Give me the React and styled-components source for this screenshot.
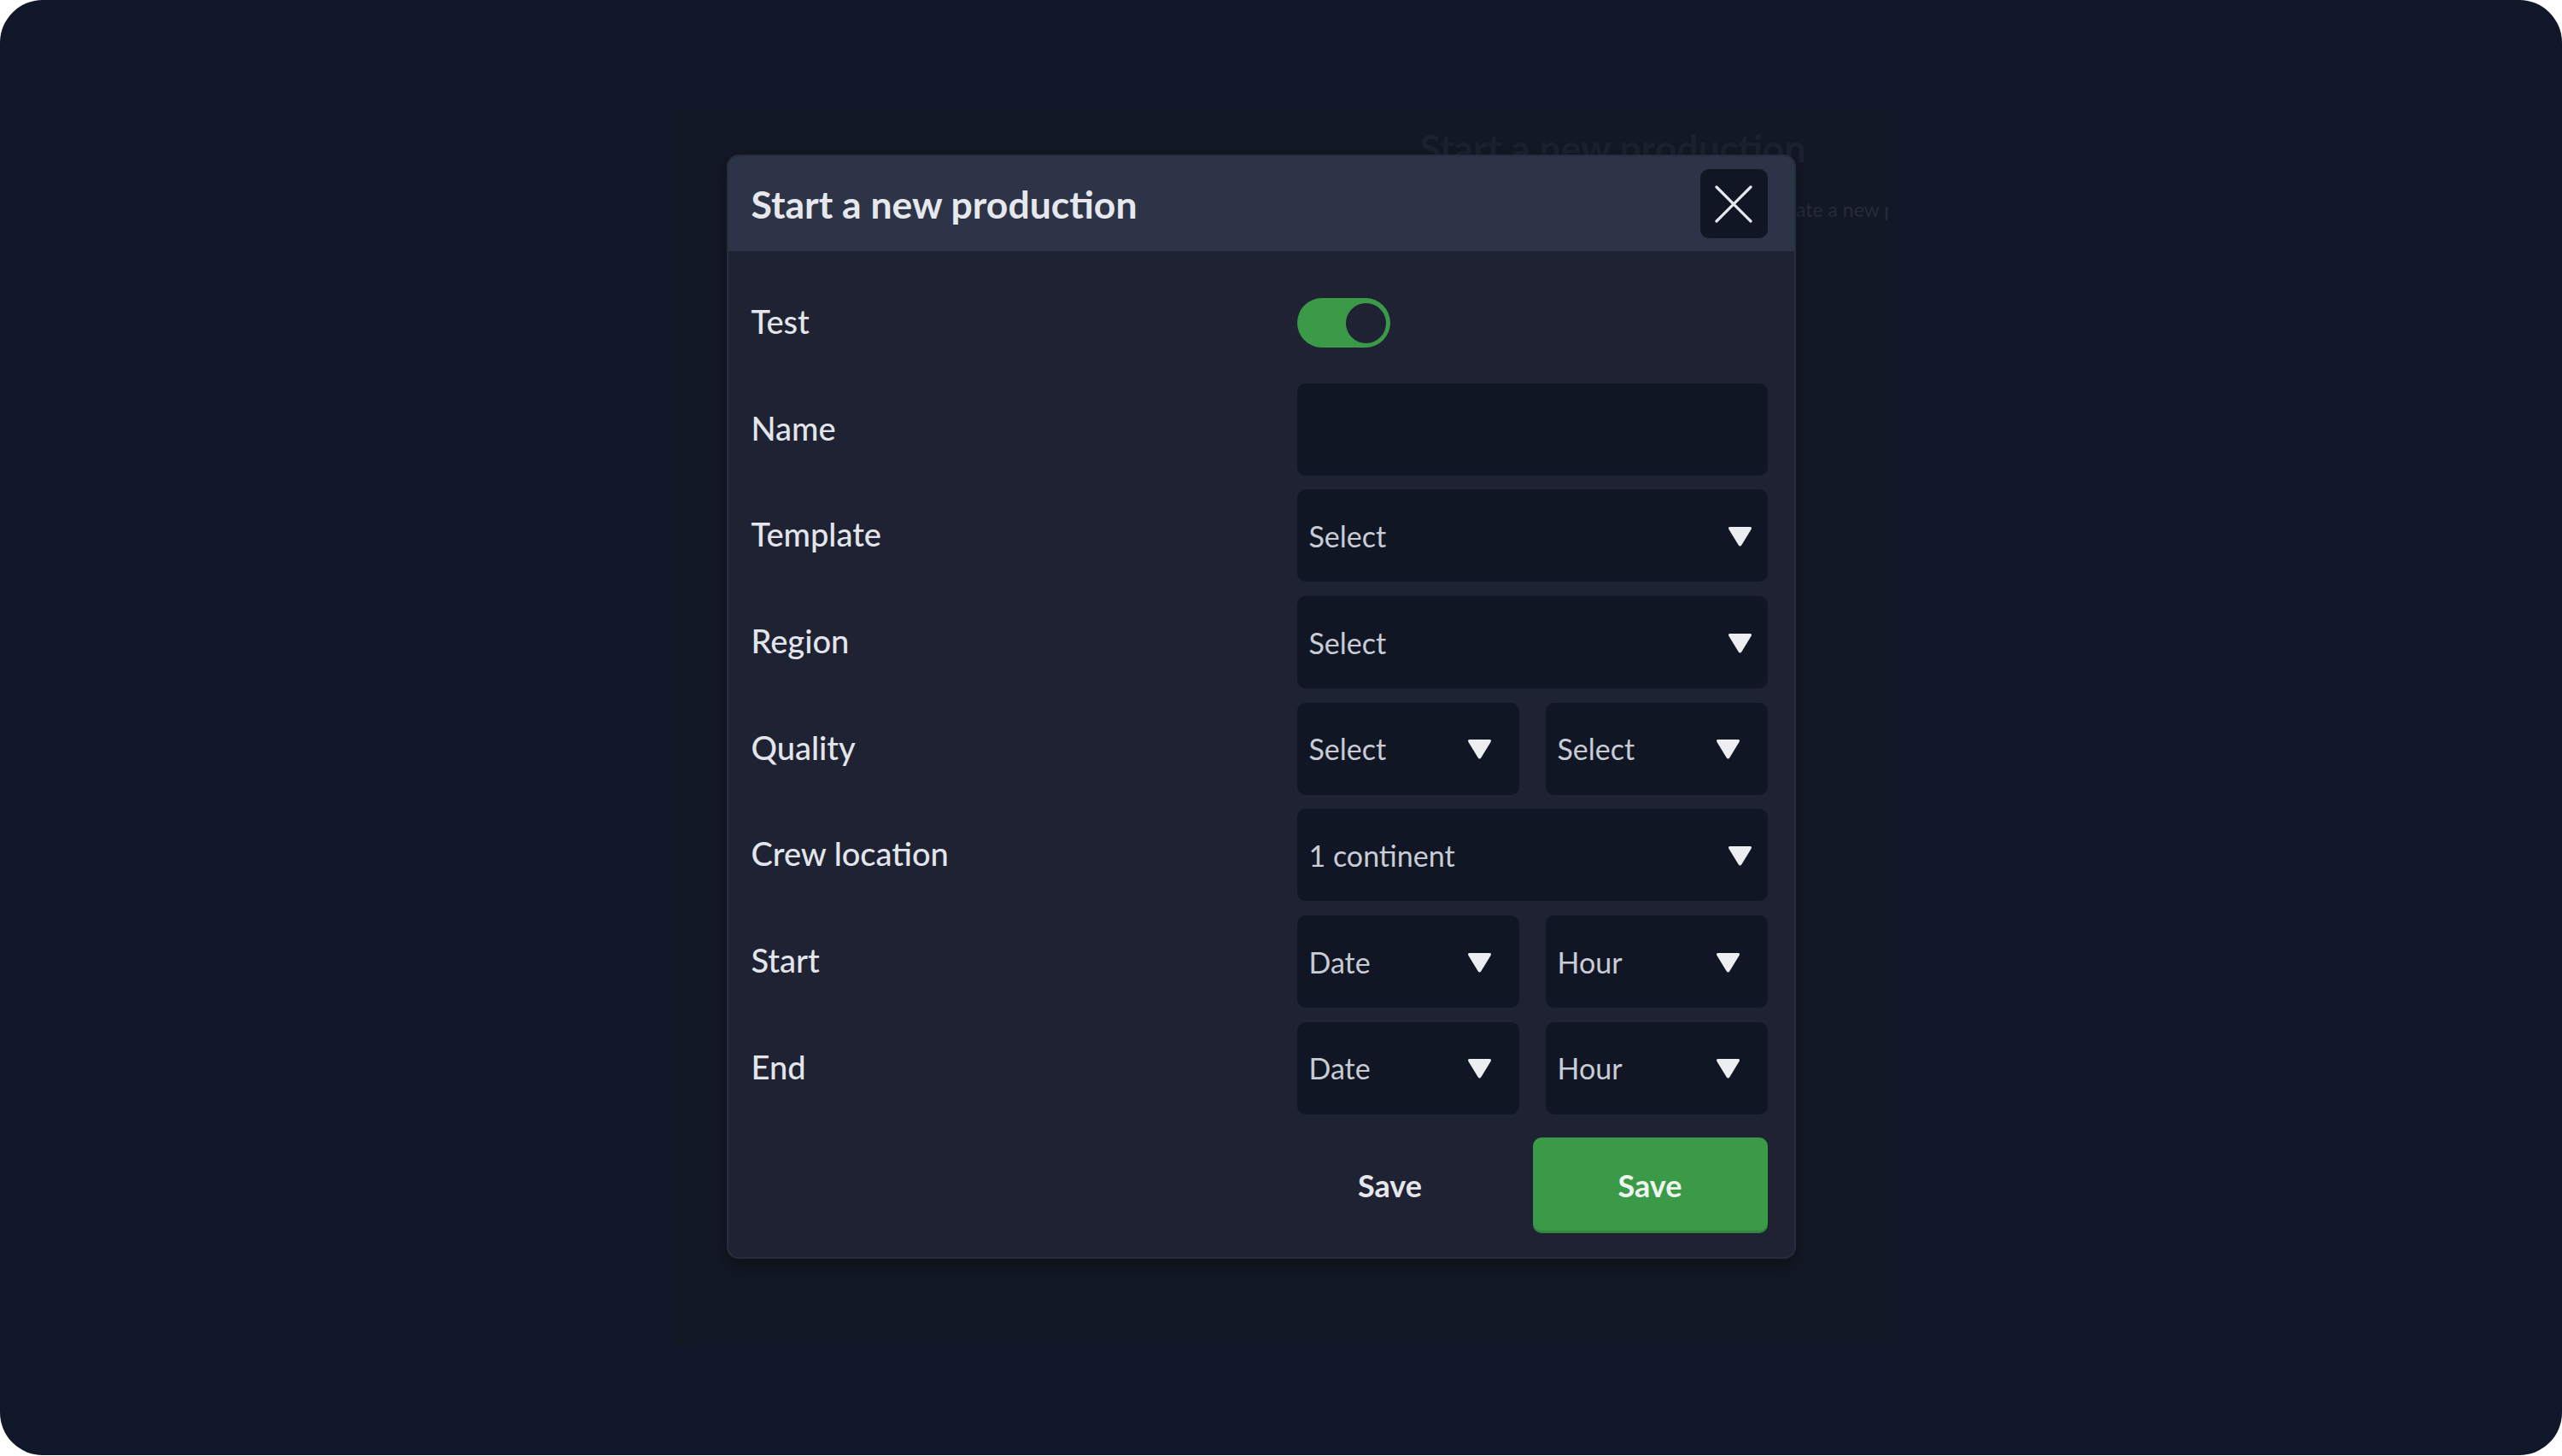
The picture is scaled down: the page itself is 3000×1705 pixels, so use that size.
import React from 'react'
import styled, { createGlobalStyle } from 'styled-components'

const GlobalStyle = createGlobalStyle`
  html, body {
    margin: 0;
    padding: 0;
    background: #ffffff;
  }
  body {
    font-family: 'Lato', 'Open Sans', sans-serif;
  }
`

const Page = styled.div`
  width: 3000px;
  height: 1704px;
  background: #0f1729;
  border-radius: 50px;
  display: flex;
  align-items: center;
  justify-content: center;
  overflow: hidden;
`

const Backdrop = styled.div`
  position: relative;
  width: 1421px;
  height: 1448px;
  box-sizing: border-box;
  padding: 18px 0 0 873px;
  background: #131825;
  overflow: hidden;
`

const GhostTitle = styled.h1`
  margin: 0;
  font-size: 44.5px;
  line-height: 1.2;
  font-weight: 700;
  color: #1c2130;
  white-space: nowrap;
`

const GhostText = styled.p`
  margin: 33px 0 0;
  font-size: 23px;
  line-height: 1.2;
  color: #262b39;
  white-space: nowrap;
`

const Modal = styled.div`
  position: absolute;
  left: 61px;
  top: 53px;
  width: 1252px;
  height: 1293px;
  box-sizing: border-box;
  background: #1e2232;
  border: 2px solid #282d3d;
  border-radius: 14px;
  box-shadow: 0 8px 20px rgba(0, 0, 0, 0.35);
  overflow: hidden;
`

const Header = styled.div`
  height: 111px;
  display: flex;
  align-items: center;
  justify-content: space-between;
  padding: 0 31px 0 27px;
  background: #2d3447;
`

const Title = styled.h2`
  margin: 0;
  font-size: 44.5px;
  font-weight: 700;
  color: #e6e8ee;
`

const CloseButton = styled.button`
  width: 79px;
  height: 81px;
  display: flex;
  align-items: center;
  justify-content: center;
  padding: 0;
  border: none;
  border-radius: 10px;
  background: #111624;
  cursor: pointer;
`

const Body = styled.div`
  display: flex;
  flex-direction: column;
  gap: 16.7px;
  padding: 30px 31px 28px 27px;
`

const Row = styled.div`
  display: flex;
  align-items: center;
  height: ${p => (p.$tall ? '112px' : '108px')};
  margin-top: ${p => (p.$tall ? '10px' : '0')};
`

const Label = styled.span`
  flex: 1;
  font-size: 38px;
  font-weight: 500;
  color: #e2e5eb;
  margin-top: -4px;
`

const Controls = styled.div`
  width: 551px;
  height: 100%;
  display: grid;
  grid-template-columns: ${p => (p.$split ? '1fr 1fr' : '1fr')};
  column-gap: 31px;
  align-items: center;
`

const Field = styled.div`
  height: 108px;
  box-sizing: border-box;
  display: flex;
  align-items: center;
  justify-content: space-between;
  padding: 0 ${p => (p.$narrow ? '32px' : '18px')} 0 14px;
  background: #111624;
  border-radius: 10px;
  font-size: 34px;
  color: #c8ccd5;
`

const TextInput = styled.input`
  height: 108px;
  box-sizing: border-box;
  width: 100%;
  padding: 0 14px;
  border: none;
  outline: none;
  background: #111624;
  border-radius: 10px;
  font-family: inherit;
  font-size: 34px;
  color: #c8ccd5;
`

const Switch = styled.div`
  width: 109px;
  height: 58px;
  box-sizing: border-box;
  display: flex;
  align-items: center;
  justify-content: flex-end;
  padding-right: 5px;
  border-radius: 29px;
  background: #3b9a48;
`

const Knob = styled.div`
  width: 47px;
  height: 47px;
  border-radius: 50%;
  background: #1e2232;
`

const Actions = styled.div`
  width: 551px;
  height: 100%;
  display: flex;
  justify-content: flex-end;
  align-items: center;
  gap: 67px;
  margin-left: auto;
`

const TextButton = styled.button`
  flex-shrink: 0;
  width: 200px;
  height: 112px;
  border: none;
  background: transparent;
  font-family: inherit;
  font-size: 36px;
  font-weight: 700;
  color: #e5e7eb;
`

const PrimaryButton = styled.button`
  flex-shrink: 0;
  width: 275px;
  height: 112px;
  border: none;
  border-radius: 10px;
  background: #3b9a48;
  box-shadow: inset 0 -3px 0 rgba(0, 0, 0, 0.12);
  font-family: inherit;
  font-size: 36px;
  font-weight: 700;
  color: #eef4ee;
`

const Caret = () => (
  <svg width="29" height="27" viewBox="0 0 29 27">
    <path
      d="M3 3 H26 Q29 3 27.5 6 L16.5 24 Q14.5 27 12.5 24 L1.5 6 Q0 3 3 3 Z"
      fill="#eceef2"
    />
  </svg>
)

const CloseIcon = () => (
  <svg width="44" height="44" viewBox="0 0 44 44">
    <path d="M2 2 L42 42 M42 2 L2 42" stroke="#e6e8ee" strokeWidth="3.2" strokeLinecap="round" />
  </svg>
)

const Select = ({ text, narrow }) => (
  <Field $narrow={narrow}>
    <span>{text}</span>
    <Caret />
  </Field>
)

const App = () => (
  <>
    <GlobalStyle />
    <Page>
      <Backdrop>
        <GhostTitle>Start a new production</GhostTitle>
        <GhostText>Please fill in all the information below to create a new production</GhostText>
        <Modal>
          <Header>
            <Title>Start a new production</Title>
            <CloseButton aria-label="Close">
              <CloseIcon />
            </CloseButton>
          </Header>
          <Body>
            <Row>
              <Label>Test</Label>
              <Controls>
                <Switch>
                  <Knob />
                </Switch>
              </Controls>
            </Row>
            <Row>
              <Label>Name</Label>
              <Controls>
                <TextInput />
              </Controls>
            </Row>
            <Row>
              <Label>Template</Label>
              <Controls>
                <Select text="Select" />
              </Controls>
            </Row>
            <Row>
              <Label>Region</Label>
              <Controls>
                <Select text="Select" />
              </Controls>
            </Row>
            <Row>
              <Label>Quality</Label>
              <Controls $split>
                <Select text="Select" narrow />
                <Select text="Select" narrow />
              </Controls>
            </Row>
            <Row>
              <Label>Crew location</Label>
              <Controls>
                <Select text="1 continent" />
              </Controls>
            </Row>
            <Row>
              <Label>Start</Label>
              <Controls $split>
                <Select text="Date" narrow />
                <Select text="Hour" narrow />
              </Controls>
            </Row>
            <Row>
              <Label>End</Label>
              <Controls $split>
                <Select text="Date" narrow />
                <Select text="Hour" narrow />
              </Controls>
            </Row>
            <Row $tall>
              <Actions>
                <TextButton>Save</TextButton>
                <PrimaryButton>Save</PrimaryButton>
              </Actions>
            </Row>
          </Body>
        </Modal>
      </Backdrop>
    </Page>
  </>
)

export default App
